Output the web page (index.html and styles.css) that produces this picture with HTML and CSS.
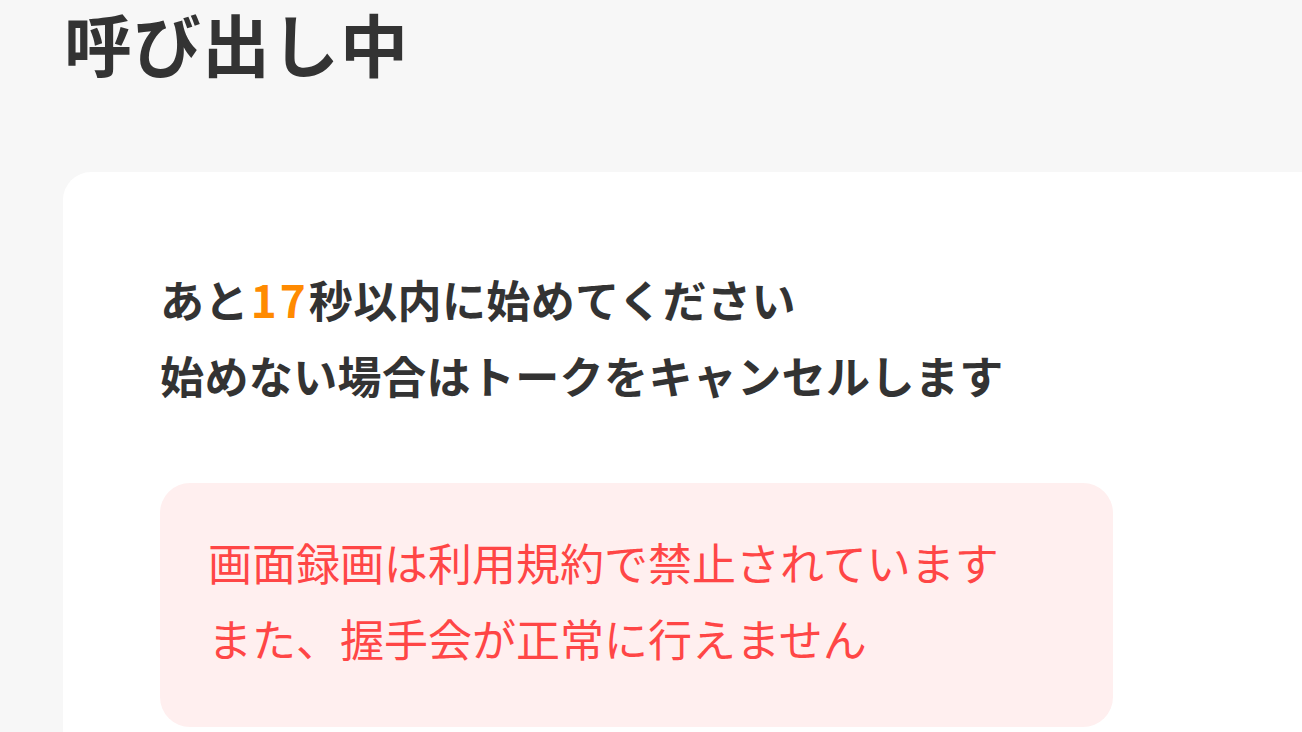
FILE: index.html
```html
<!DOCTYPE html>
<html lang="ja">
<head>
<meta charset="utf-8">
<title>呼び出し中</title>
<link rel="stylesheet" href="styles.css">
</head>
<body>
<div class="page">
  <h1 class="title">呼び出し中</h1>
  <section class="card">
    <p class="message">あと<span class="count">17</span>秒以内に始めてください<br>始めない場合はトークをキャンセルします</p>
    <div class="alert">
      <p class="alert-text">画面録画は利用規約で禁止されています<br>また、握手会が正常に行えません</p>
    </div>
  </section>
</div>
</body>
</html>
```

FILE: styles.css
```css
html, body {
  margin: 0;
  padding: 0;
  background: #f7f7f7;
  font-family: "Noto Sans CJK JP", "Noto Sans", sans-serif;
  overflow: hidden;
}

.page {
  width: 1302px;
  height: 732px;
  display: flex;
  flex-direction: column;
}

.title {
  margin: 0;
  padding: 2px 0 0 64px;
  height: 172px;
  flex: none;
  box-sizing: border-box;
  font-size: 68px;
  line-height: 82px;
  font-weight: 700;
  color: #333333;
  letter-spacing: 1px;
}

.card {
  margin-left: 63px;
  flex: 1;
  background: #ffffff;
  border-radius: 28px 0 0 0;
  padding: 89px 0 0 97px;
}

.message {
  margin: 0;
  font-size: 44px;
  line-height: 76px;
  font-weight: 700;
  color: #333333;
  letter-spacing: 0.4px;
}

.count {
  color: #ff8a00;
  letter-spacing: 3px;
  margin-left: 2px;
}

.alert {
  margin-top: 70px;
  width: 953px;
  height: 244px;
  box-sizing: border-box;
  background: #ffefef;
  border-radius: 30px;
  padding: 41px 0 0 48px;
}

.alert-text {
  margin: 0;
  font-size: 44px;
  line-height: 76px;
  font-weight: 400;
  color: #ff4646;
}
```
